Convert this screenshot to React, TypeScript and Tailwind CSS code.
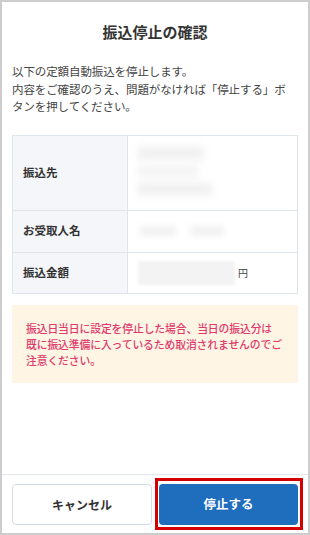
import React from 'react';

export default function App() {
  const font = { fontFamily: '"Noto Sans CJK JP", "Noto Sans", sans-serif' };

  return (
    <div
      className="w-[310px] h-[535px] bg-white border-2 border-[#cdcdcd] flex flex-col overflow-hidden"
      style={font}
    >
      {/* Title */}
      <div className="pt-[19px] text-center">
        <h1 className="text-[15px] leading-[22px] font-bold text-[#333]">振込停止の確認</h1>
      </div>

      {/* Body */}
      <div className="px-[10px]">
        <p className="mt-[20px] text-[11.5px] leading-[17.5px] text-[#444] whitespace-nowrap tracking-[-0.1px]">
          以下の定額自動振込を停止します。
          <br />
          内容をご確認のうえ、問題がなければ「停止する」ボ
          <br />
          タンを押してください。
        </p>

        {/* Table */}
        <div className="mt-[19px] border border-[#dfe5ec] text-[11.5px]">
          <div className="flex h-[75px] border-b border-[#dfe5ec]">
            <div className="w-[115px] bg-[#f4f6f9] border-r border-[#dfe5ec] flex items-center pl-[10px] font-bold text-[#333]">
              振込先
            </div>
            <div className="flex-1 pl-[10px] pt-[11px] flex flex-col gap-[6px]">
              <div className="w-[66px] h-[12px] bg-[#efefef] blur-[4px]" />
              <div className="w-[60px] h-[12px] bg-[#f3f3f3] blur-[4px]" />
              <div className="w-[74px] h-[12px] bg-[#efefef] blur-[4px]" />
            </div>
          </div>
          <div className="flex h-[42px] border-b border-[#dfe5ec]">
            <div className="w-[115px] bg-[#f4f6f9] border-r border-[#dfe5ec] flex items-center pl-[10px] font-bold text-[#333]">
              お受取人名
            </div>
            <div className="flex-1 pl-[12px] flex items-center gap-[14px]">
              <div className="w-[36px] h-[10px] bg-[#f1f1f1] blur-[3px]" />
              <div className="w-[34px] h-[10px] bg-[#f1f1f1] blur-[3px]" />
            </div>
          </div>
          <div className="flex h-[40px]">
            <div className="w-[115px] bg-[#f4f6f9] border-r border-[#dfe5ec] flex items-center pl-[10px] font-bold text-[#333]">
              振込金額
            </div>
            <div className="flex-1 pl-[10px] flex items-center gap-[3px]">
              <div className="w-[97px] h-[24px] bg-[#f3f3f3] blur-[1.5px]" />
              <span className="text-[10px] text-[#444]">円</span>
            </div>
          </div>
        </div>

        {/* Notice */}
        <div className="mt-[11px] bg-[#fff5e4] px-[14px] py-[15px]">
          <p className="text-[10.8px] leading-[16px] font-medium text-[#e03a6c] whitespace-nowrap tracking-[-0.1px]">
            振込日当日に設定を停止した場合、当日の振込分は
            <br />
            既に振込準備に入っているため取消されませんのでご
            <br />
            注意ください。
          </p>
        </div>
      </div>

      <div className="flex-1" />

      {/* Footer */}
      <div className="border-t border-[#e3e8ee] px-[10px] pt-[9px] pb-[8px] flex gap-[7px]">
        <button className="w-[140px] h-[41px] rounded-[4px] border border-[#d5dbe3] bg-white text-[12px] font-bold text-[#333]">
          キャンセル
        </button>
        <div className="relative flex-1">
          <button className="w-full h-[41px] rounded-[4px] bg-[#1f6dbd] text-[12.5px] font-bold text-white">
            停止する
          </button>
          <div className="absolute -left-[4px] -right-[5px] -top-[6px] -bottom-[5px] border-[3px] border-[#d40000] pointer-events-none" />
        </div>
      </div>
    </div>
  );
}
